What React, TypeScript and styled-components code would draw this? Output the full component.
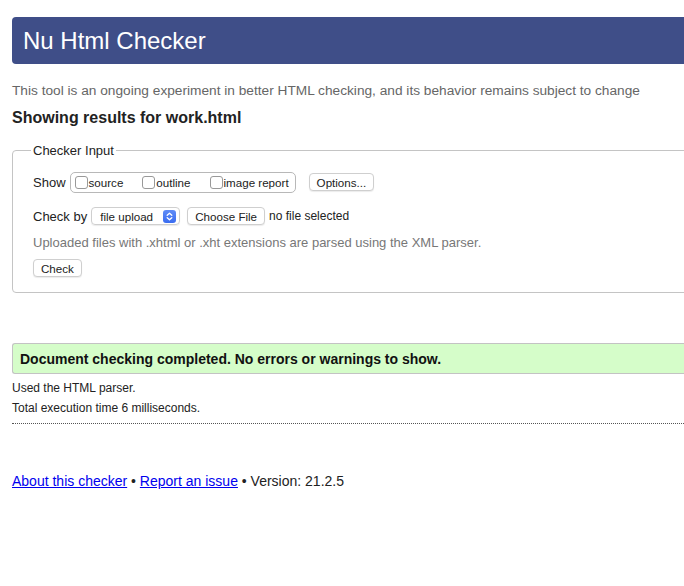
import React from "react";
import styled, { createGlobalStyle } from "styled-components";

/* ─────────────── Global ─────────────── */
const GlobalStyle = createGlobalStyle`
  html, body {
    margin: 0;
    padding: 0;
    overflow: hidden;
    background: #fff;
  }
  body {
    font-family: "Liberation Sans", Arial, Helvetica, sans-serif;
    color: #000;
  }
`;

/* ─────────────── Layout ─────────────── */
const Page = styled.div`
  width: 760px;
  padding: 17px 0 40px 12px;
`;

const TitleBar = styled.h1`
  margin: 0;
  height: 47px;
  display: flex;
  align-items: center;
  padding-left: 11px;
  background: #3f4e88;
  color: #fff;
  font-size: 24px;
  font-weight: normal;
  border-radius: 4px 0 0 4px;
`;

const Tagline = styled.p`
  margin: 19px 0 0;
  font-size: 13.7px;
  color: #666;
`;

const ResultsHeading = styled.h2`
  margin: 11px 0 0;
  font-size: 16px;
  font-weight: bold;
  color: #222;
`;

const Fieldset = styled.fieldset`
  margin: 16px 0 0;
  padding: 6px 20px 14px;
  border: 1px solid #c4c4c4;
  border-radius: 4px;
`;

const Legend = styled.legend`
  padding: 0 2px;
  margin-left: -2px;
  font-size: 13px;
  color: #222;
`;

const Row = styled.div<{ $gap?: number }>`
  display: flex;
  align-items: center;
  height: 20px;
  margin-top: ${({ $gap }) => $gap ?? 0}px;
  font-size: 13px;
  color: #222;
`;

const RowLabel = styled.span`
  margin-right: 4px;
`;

const CheckGroup = styled.div`
  display: flex;
  align-items: center;
  height: 19px;
  padding: 0 6px 0 4px;
  border: 1px solid #b8b8b8;
  border-radius: 5px;
  font-size: 11.6px;
`;

const CheckItem = styled.label<{ $space?: number }>`
  display: flex;
  align-items: center;
  margin-right: ${({ $space }) => $space ?? 0}px;
  color: #222;
`;

const Box = styled.span`
  width: 13px;
  height: 13px;
  margin-right: 1px;
  border: 1px solid #999;
  border-radius: 3px;
  background: #fff;
  box-sizing: border-box;
`;

const PushButton = styled.button<{ $left?: number }>`
  height: 18px;
  padding: 0 7px;
  margin-left: ${({ $left }) => $left ?? 0}px;
  border: 1px solid #cfcfcf;
  border-radius: 4px;
  background: #fff;
  box-shadow: 0 1px 1px rgba(0, 0, 0, 0.08);
  font-family: inherit;
  font-size: 11.6px;
  color: #222;
  cursor: pointer;
`;

const Select = styled.div`
  display: flex;
  align-items: center;
  justify-content: space-between;
  width: 89px;
  height: 18px;
  box-sizing: border-box;
  padding: 0 3px 0 8px;
  border: 1px solid #cfcfcf;
  border-radius: 4px;
  box-shadow: 0 1px 1px rgba(0, 0, 0, 0.08);
  font-size: 11.6px;
  color: #222;
`;

const Stepper = styled.span`
  display: flex;
  width: 13px;
  height: 13px;
  border-radius: 3px;
  background: linear-gradient(#5f8cf7, #3a6cf0);
`;

const Hint = styled.span`
  font-size: 12px;
  color: #222;
  margin-left: 4px;
`;

const Note = styled.p`
  margin: 9px 0 0;
  font-size: 13px;
  color: #777;
`;

const SuccessBox = styled.div`
  margin-top: 50px;
  height: 29px;
  display: flex;
  align-items: center;
  padding-left: 7px;
  background: #d5fdc9;
  border: 1px solid #c3c3c3;
  border-right: none;
  border-radius: 3px 0 0 3px;
  font-size: 14px;
  font-weight: bold;
  color: #111;
`;

const Detail = styled.p<{ $top: number }>`
  margin: ${({ $top }) => $top}px 0 0;
  font-size: 12px;
  line-height: 14px;
  color: #222;
`;

const Rule = styled.hr`
  margin: 8px 0 0;
  border: none;
  border-top: 1px dotted #555;
`;

const Footer = styled.p`
  margin: 49px 0 0;
  font-size: 14px;
  color: #222;
`;

const Link = styled.a`
  color: #0000ee;
  text-decoration: underline;
`;

/* ─────────────── Component ─────────────── */
const Checkbox: React.FC<{ label: string; space?: number }> = ({ label, space }) => (
  <CheckItem $space={space}>
    <Box />
    {label}
  </CheckItem>
);

const App: React.FC = () => (
  <>
    <GlobalStyle />
    <Page>
      <TitleBar>Nu Html Checker</TitleBar>
      <Tagline>
        This tool is an ongoing experiment in better HTML checking, and its behavior remains subject to change
      </Tagline>
      <ResultsHeading>Showing results for work.html</ResultsHeading>

      <Fieldset>
        <Legend>Checker Input</Legend>
        <Row $gap={8}>
          <RowLabel>Show</RowLabel>
          <CheckGroup>
            <Checkbox label="source" space={19} />
            <Checkbox label="outline" space={19} />
            <Checkbox label="image report" />
          </CheckGroup>
          <PushButton $left={13}>Options...</PushButton>
        </Row>
        <Row $gap={14}>
          <RowLabel>Check by</RowLabel>
          <Select>
            file upload
            <Stepper>
              <svg width="13" height="13" viewBox="0 0 13 13">
                <path
                  d="M4.2 5.3 L6.5 3.2 L8.8 5.3 M4.2 7.7 L6.5 9.8 L8.8 7.7"
                  fill="none"
                  stroke="#fff"
                  strokeWidth="1.3"
                  strokeLinecap="round"
                  strokeLinejoin="round"
                />
              </svg>
            </Stepper>
          </Select>
          <PushButton $left={7}>Choose File</PushButton>
          <Hint>no file selected</Hint>
        </Row>
        <Note>Uploaded files with .xhtml or .xht extensions are parsed using the XML parser.</Note>
        <Row $gap={8}>
          <PushButton>Check</PushButton>
        </Row>
      </Fieldset>

      <SuccessBox>Document checking completed. No errors or warnings to show.</SuccessBox>
      <Detail $top={7}>Used the HTML parser.</Detail>
      <Detail $top={6}>Total execution time 6 milliseconds.</Detail>
      <Rule />

      <Footer>
        <Link href="#">About this checker</Link> • <Link href="#">Report an issue</Link> • Version: 21.2.5
      </Footer>
    </Page>
  </>
);

export default App;
